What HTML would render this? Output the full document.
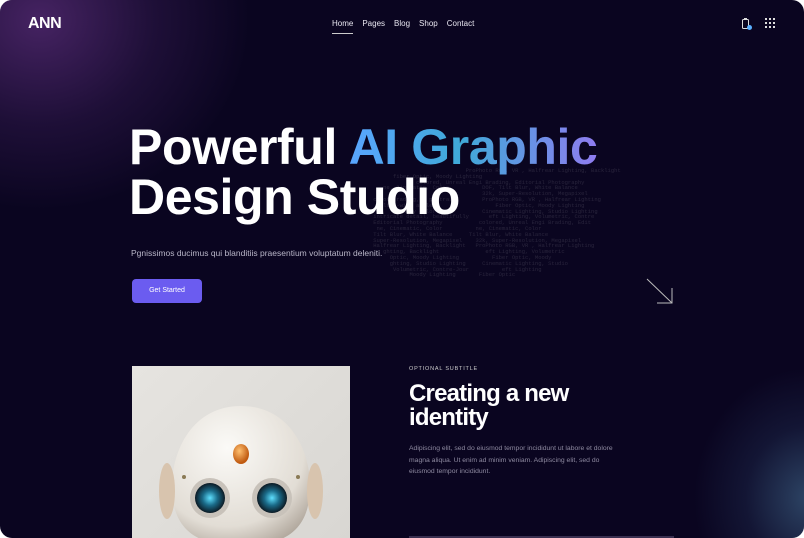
<!DOCTYPE html>
<html><head><meta charset="utf-8"><style>
*{margin:0;padding:0;box-sizing:border-box}
html,body{width:804px;height:538px;background:#fff;overflow:hidden;font-family:"Liberation Sans",sans-serif}
.w{position:absolute;inset:0;border-radius:12px;overflow:hidden;background:#0a0520}
.g1{position:absolute;left:-170px;top:-170px;width:420px;height:380px;background:radial-gradient(closest-side,rgba(80,40,110,.85),rgba(60,30,90,.4) 55%,rgba(10,5,32,0));}
.g2{position:absolute;right:-120px;bottom:-90px;width:230px;height:260px;background:radial-gradient(closest-side,rgba(60,95,130,.7),rgba(40,60,100,.3) 55%,rgba(10,5,32,0));}
.logo{position:absolute;left:28px;top:15px;color:#fff;font-weight:700;font-size:16px;letter-spacing:-.5px}
.nav{position:absolute;left:332px;top:19px;color:#e8e6f0;font-size:8px;display:flex;gap:9px}
.nav span:first-child{border-bottom:1px solid #ccc;padding-bottom:5px}
h1{position:absolute;left:129px;top:122px;color:#fff;font-size:50px;font-weight:700;letter-spacing:-.4px;line-height:50px}
.grad{background:linear-gradient(90deg,#5aa6ff,#3fa9d8 45%,#8f7cf0);-webkit-background-clip:text;background-clip:text;color:transparent}
.sub{position:absolute;left:131px;top:248px;color:#b9b6c8;font-size:8.5px}
.btn{position:absolute;left:132px;top:279px;width:70px;height:24px;background:#6b5cf0;border-radius:4px;color:#fff;font-size:7px;text-align:center;line-height:24px}
.code{position:absolute;left:360px;top:168px;font-family:"Liberation Mono",monospace;font-size:5.5px;line-height:5.8px;color:rgba(255,255,255,.12);white-space:pre}
.img{position:absolute;left:132px;top:366px;width:218px;height:180px;background:linear-gradient(135deg,#e6e4e0,#d8d6d2)}
.os{position:absolute;left:409px;top:366px;color:#ccc;font-size:5.5px;letter-spacing:.8px}
h2{position:absolute;left:409px;top:382px;color:#fff;font-size:24px;font-weight:700;letter-spacing:-.8px;line-height:24px}
.p{position:absolute;left:409px;top:443px;color:#8e8aa0;font-size:6.8px;line-height:11.7px;width:215px}
.line{position:absolute;left:409px;top:536px;width:265px;height:2px;background:#3a3050}
</style></head><body><div class="w">
<div class="g1"></div><div class="g2"></div>
<div class="logo">ANN</div>
<div class="nav"><span>Home</span><span>Pages</span><span>Blog</span><span>Shop</span><span>Contact</span></div>
<svg style="position:absolute;left:741px;top:17px" width="14" height="14"><rect x="1.5" y="2.5" width="6" height="9" rx="1" fill="none" stroke="#ddd"/><rect x="3" y="1" width="3" height="2" fill="#ddd"/><circle cx="8.5" cy="10.5" r="2.5" fill="#5ab0ff"/></svg>
<svg style="position:absolute;left:765px;top:18px" width="10" height="10" fill="#ddd"><rect x="0" y="0" width="2" height="2"/><rect x="4" y="0" width="2" height="2"/><rect x="8" y="0" width="2" height="2"/><rect x="0" y="4" width="2" height="2"/><rect x="4" y="4" width="2" height="2"/><rect x="8" y="4" width="2" height="2"/><rect x="0" y="8" width="2" height="2"/><rect x="4" y="8" width="2" height="2"/><rect x="8" y="8" width="2" height="2"/></svg>
<div class="code">                                ProPhoto RGB, VR , Halfrear Lighting, Backlight
          fiber Optic, Moody Lighting
                 colored, Unreal Engi Brading, Editorial Photography
       ne, Cinematic, Color          DOF, Tilt Blur, White Balance
                                     32k, Super-Resolution, Megapixel
    color grading,   portrait        ProPhoto RGB, VR , Halfrear Lighting
      ultra-wide angle                   Fiber Optic, Moody Lighting
          eded by color              Cinematic Lighting, Studio Lighting
    intricate detail, beautifully      eft Lighting, Volumetric, Contre
    Editorial Photography           colored, Unreal Engi Brading, Edit
     ne, Cinematic, Color          ne, Cinematic, Color
    Tilt Blur, White Balance     Tilt Blur, White Balance
    Super-Resolution, Megapixel    32k, Super-Resolution, Megapixel
    Halfrear Lighting, Backlight   ProPhoto RGB, VR , Halfrear Lighting
       ghting, Backlight              eft Lighting, Volumetric
         Optic, Moody Lighting          Fiber Optic, Moody
         ghting, Studio Lighting     Cinematic Lighting, Studio
          Volumetric, Contre-Jour          eft Lighting
               Moody Lighting       Fiber Optic</div>
<h1>Powerful <span class="grad">AI Graphic</span><br>Design Studio</h1>
<div class="sub">Pgnissimos ducimus qui blanditiis praesentium voluptatum deleniti.</div>
<div class="btn">Get Started</div>
<svg style="position:absolute;left:646px;top:278px" width="28" height="27" fill="none" stroke="#bbb" stroke-width="1"><path d="M1 1L26 25M26 10V25H11"/></svg>
<div class="img"><svg width="218" height="180" viewBox="0 0 218 180">
<defs><radialGradient id="h" cx=".4" cy=".3" r=".8"><stop offset="0" stop-color="#fbfaf7"/><stop offset=".7" stop-color="#e2ddd5"/><stop offset="1" stop-color="#a99f94"/></radialGradient>
<radialGradient id="e" cx=".5" cy=".5" r=".5"><stop offset="0" stop-color="#5fe0ff"/><stop offset=".5" stop-color="#1a6a88"/><stop offset="1" stop-color="#0c1a24"/></radialGradient>
<radialGradient id="o" cx=".4" cy=".35" r=".6"><stop offset="0" stop-color="#ffc070"/><stop offset="1" stop-color="#c05a10"/></radialGradient></defs>
<path d="M109 40C60 40 40 85 40 120C40 160 60 180 109 180C158 180 178 160 178 120C178 85 158 40 109 40Z" fill="url(#h)"/>
<ellipse cx="35" cy="125" rx="8" ry="28" fill="#d8c4ae"/><ellipse cx="183" cy="125" rx="8" ry="28" fill="#d8c4ae"/>
<ellipse cx="109" cy="88" rx="8" ry="10" fill="url(#o)"/>
<circle cx="78" cy="132" r="20" fill="#c8c2ba"/><circle cx="78" cy="132" r="15" fill="url(#e)"/>
<circle cx="140" cy="132" r="20" fill="#c8c2ba"/><circle cx="140" cy="132" r="15" fill="url(#e)"/>
<circle cx="52" cy="111" r="2" fill="#8a7a55"/><circle cx="166" cy="111" r="2" fill="#8a7a55"/>
</svg></div>
<div class="os">OPTIONAL SUBTITLE</div>
<h2>Creating a new<br>identity</h2>
<div class="p">Adipiscing elit, sed do eiusmod tempor incididunt ut labore et dolore magna aliqua. Ut enim ad minim veniam. Adipiscing elit, sed do eiusmod tempor incididunt.</div>
<div class="line"></div>
</div></body></html>
